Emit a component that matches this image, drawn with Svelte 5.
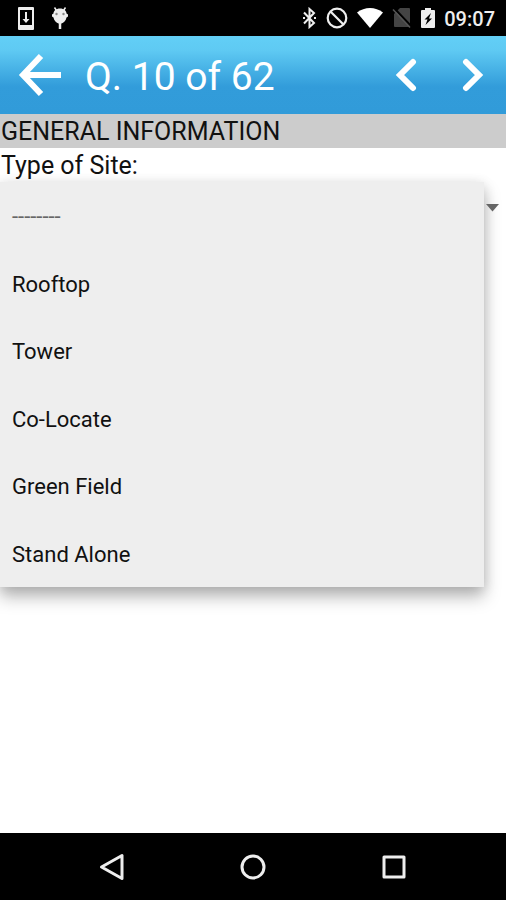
<script>
	let current = $state(10);
	let open = $state(true);
	let site = $state('');

	const total = 62;
	const options = [
		{ value: '', label: '--------' },
		{ value: 'rooftop', label: 'Rooftop' },
		{ value: 'tower', label: 'Tower' },
		{ value: 'colocate', label: 'Co-Locate' },
		{ value: 'greenfield', label: 'Green Field' },
		{ value: 'standalone', label: 'Stand Alone' }
	];

	function go(step) {
		current = Math.min(total, Math.max(1, current + step));
	}

	function choose(value) {
		site = value;
		open = false;
	}

	function showList(e) {
		e.preventDefault();
		open = !open;
	}
</script>

<div class="screen">
	<div class="status">
		<div class="notifications">
			<svg width="16" height="24" viewBox="0 0 16 24">
				<path fill="#eee" fill-rule="evenodd" d="M1 1h14a1 1 0 0 1 1 1v21a1 1 0 0 1-1 1H1a1 1 0 0 1-1-1V2a1 1 0 0 1 1-1zM2 4v15h12V4z" />
				<path fill="#eee" d="M7 6h2v7h2.500L8 17l-3.500-4H7z" />
			</svg>
			<svg width="18" height="24" viewBox="0 0 18 24">
				<path d="M3.500 1.500l2 3M14.500 1.500l-2 3" stroke="#eee" stroke-width="1.500" />
				<path fill="#eee" d="M9 2.500c4 0 6.500 2.500 6.500 5l1.500 1v2l-1.500 1c-.500 3-3 5.500-5 6h-3c-2-.500-4.500-3-5-6l-1.500-1v-2l1.500-1c0-2.500 2.500-5 6.500-5z" />
				<path d="M9 17v6" stroke="#eee" stroke-width="2.500" />
				<circle cx="5.500" cy="8" r="1.200" fill="#888" />
				<circle cx="12.500" cy="8" r="1.200" fill="#888" />
			</svg>
		</div>
		<div class="system">
			<svg width="15" height="22" viewBox="0 0 15 22" fill="none" stroke="#eee" stroke-width="2">
				<path d="M2 5.500l10 10.500l-4.500 4V2L12 6L2 16.500" />
				<path d="M1 11h2M12 11h2" />
			</svg>
			<svg width="22" height="22" viewBox="0 0 22 22" fill="none" stroke="#eee" stroke-width="2.200">
				<circle cx="11" cy="11" r="9.300" />
				<path d="M4.500 4.500l13 13" />
			</svg>
			<svg width="26" height="22" viewBox="0 0 26 22">
				<path fill="#fff" d="M0 5.500C7.500-.500 18.500-.500 26 5.500L13 21z" />
			</svg>
			<svg width="20" height="22" viewBox="0 0 20 22">
				<path fill="#444" d="M8 1h9a1 1 0 0 1 1 1v18H3a1 1 0 0 1-1-1V7z" />
				<path d="M2 1l18 19" stroke="#000" stroke-width="2" />
				<path d="M1 2.500l17 18" stroke="#555" stroke-width="1.500" />
			</svg>
			<svg width="14" height="22" viewBox="0 0 14 22">
				<path fill="#eee" d="M4 1h6v2h3a1 1 0 0 1 1 1v16a1 1 0 0 1-1 1H1a1 1 0 0 1-1-1V4a1 1 0 0 1 1-1h3z" />
				<path fill="#000" d="M10 6l-6.500 6.500h3L4.500 18l6.500-6.500H8z" />
			</svg>
			<time>09:07</time>
		</div>
	</div>

	<header>
		<button class="back" aria-label="Back">
			<svg width="44" height="44" viewBox="0 0 44 44" fill="none" stroke="#fff" stroke-width="6">
				<path d="M23 3L5 22l18 19M4 22h39" />
			</svg>
		</button>
		<h1>Q. {current} of {total}</h1>
		<button class="step" aria-label="Previous question" onclick={() => go(-1)}>
			<svg width="22" height="36" viewBox="0 0 22 36" fill="none" stroke="#fff" stroke-width="6" stroke-linecap="round">
				<path d="M18 5L5 18l13 13" />
			</svg>
		</button>
		<button class="step" aria-label="Next question" onclick={() => go(1)}>
			<svg width="22" height="36" viewBox="0 0 22 36" fill="none" stroke="#fff" stroke-width="6" stroke-linecap="round">
				<path d="M4 5l13 13L4 31" />
			</svg>
		</button>
	</header>

	<main>
		<h2>GENERAL INFORMATION</h2>
		<label for="site">Type of Site:</label>
		<div class="field">
			<select id="site" bind:value={site} onmousedown={showList}>
				{#each options as option}
					<option value={option.value}>{option.label}</option>
				{/each}
			</select>
			{#if open}
				<div class="popup" role="listbox" aria-label="Type of Site">
					{#each options as option}
						<button
							class:empty={!option.value}
							role="option"
							aria-selected={site === option.value}
							onclick={() => choose(option.value)}
						>{option.label}</button>
					{/each}
				</div>
			{/if}
			<svg class="caret" width="13" height="8" viewBox="0 0 13 8">
				<path fill="#666" d="M0 0h13L6.500 7.500z" />
			</svg>
		</div>
	</main>

	<nav>
		<button aria-label="Back">
			<svg width="28" height="28" viewBox="0 0 28 28" fill="none" stroke="#eee" stroke-width="3" stroke-linejoin="round">
				<path d="M24 2.500v23L3.500 14z" />
			</svg>
		</button>
		<button aria-label="Home">
			<svg width="28" height="28" viewBox="0 0 28 28" fill="none" stroke="#eee" stroke-width="3">
				<circle cx="14" cy="14" r="11" />
			</svg>
		</button>
		<button aria-label="Recent apps">
			<svg width="28" height="28" viewBox="0 0 28 28" fill="none" stroke="#eee" stroke-width="3" stroke-linejoin="round">
				<path d="M4 4h20v20H4z" />
			</svg>
		</button>
	</nav>
</div>

<style>
	:global(body) {
		margin: 0;
		background: #fff;
	}

	.screen {
		display: flex;
		flex-direction: column;
		min-height: 100vh;
		font-family: Roboto, sans-serif;
		color: #111;
	}

	button {
		display: flex;
		align-items: center;
		justify-content: center;
		margin: 0;
		padding: 0;
		border: 0;
		background: none;
		color: inherit;
		font: inherit;
		cursor: pointer;
	}

	svg {
		display: block;
		flex: none;
	}

	.status {
		display: flex;
		justify-content: space-between;
		align-items: center;
		height: 36px;
		padding: 0 11px 0 18px;
		background: #000;
		color: #eee;
	}

	.notifications {
		display: flex;
		gap: 17px;
	}

	.system {
		display: flex;
		align-items: center;
		gap: 9px;
	}

	time {
		font-size: 20px;
		font-weight: 500;
		line-height: 22px;
		padding-top: 2px;
	}

	header {
		display: flex;
		align-items: center;
		height: 78px;
		padding-left: 18px;
		background: linear-gradient(#62cff6, #5fcaf3 18%, #329cda 65%, #319bd9);
		color: #fff;
	}

	h1 {
		flex: 1;
		margin: 0;
		padding: 4px 0 0 23px;
		font-size: 39px;
		font-weight: 400;
		line-height: 46px;
	}

	.step {
		width: 67px;
		height: 78px;
	}

	main {
		flex: 1;
	}

	h2 {
		margin: 0;
		padding: 3px 1px 1px;
		background: #ccc;
		font-size: 25px;
		font-weight: 400;
		line-height: 30px;
	}

	label {
		display: block;
		padding: 3px 1px 1px;
		font-size: 25px;
		line-height: 30px;
	}

	.field {
		position: relative;
	}

	select {
		display: block;
		width: 100%;
		height: 52px;
		padding: 0 12px;
		border: 0;
		background: none;
		color: inherit;
		font: 22px Roboto, sans-serif;
		appearance: none;
	}

	.popup {
		position: absolute;
		top: 0;
		left: 0;
		right: 22px;
		display: grid;
		grid-auto-rows: 1fr;
		height: 405px;
		background: #eee;
		box-shadow: 0 10px 16px rgba(0, 0, 0, 0.27), 0 2px 12px rgba(0, 0, 0, 0.12);
	}

	.popup button {
		justify-content: flex-start;
		padding: 3px 12px 0;
		font-size: 22px;
		line-height: 28px;
	}

	.popup .empty {
		color: #666;
	}

	.caret {
		position: absolute;
		top: 22px;
		right: 7px;
		pointer-events: none;
	}

	nav {
		display: flex;
		justify-content: center;
		gap: 113px;
		height: 67px;
		background: #000;
	}
</style>
